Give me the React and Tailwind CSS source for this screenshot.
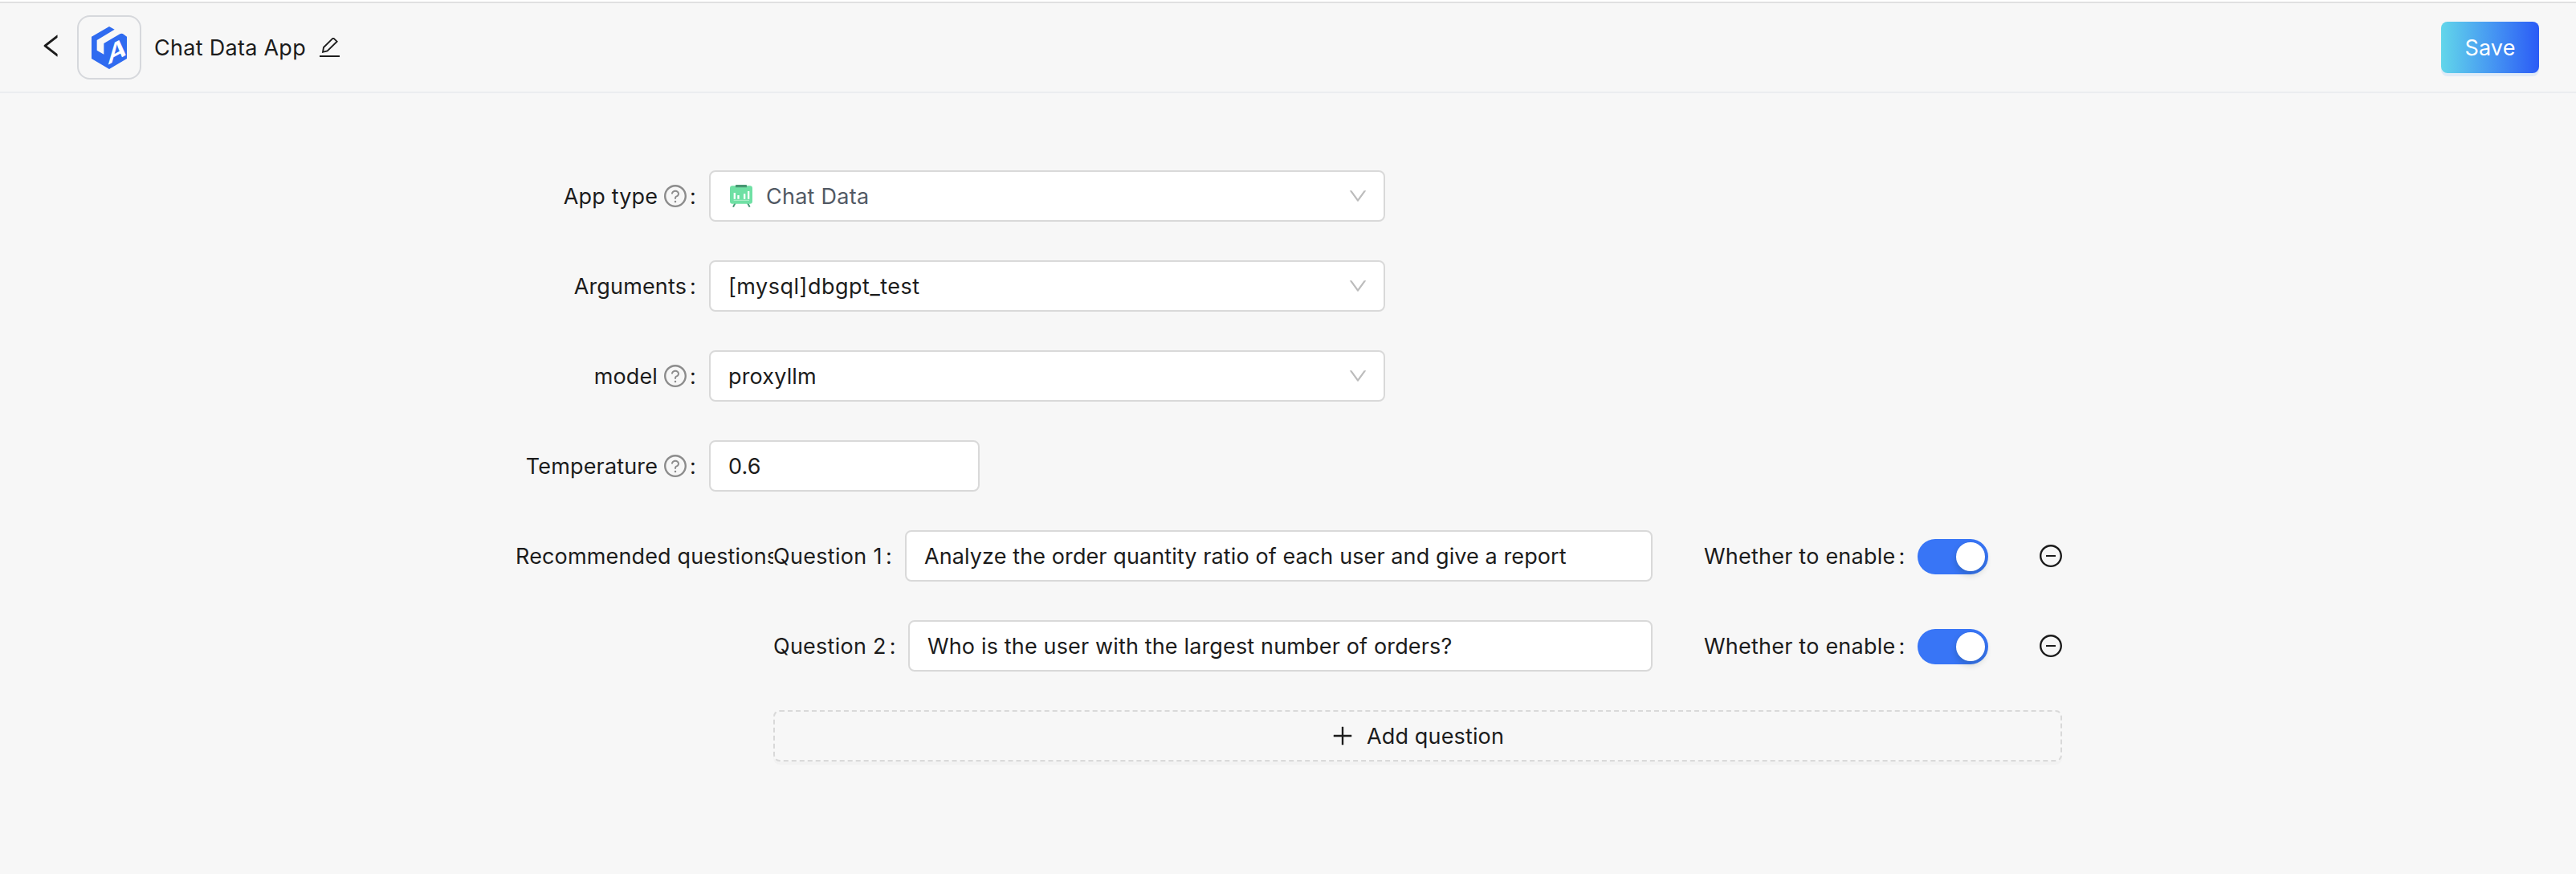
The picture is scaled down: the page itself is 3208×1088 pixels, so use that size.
import React from 'react';
import {
  AiOutlineLeft,
  AiOutlineQuestionCircle,
  AiOutlineDown,
  AiOutlineMinusCircle,
  AiOutlinePlus,
} from 'react-icons/ai';

const ICON_BOX = '64 64 896 896';

function Logo() {
  return (
    <svg className="h-[53px] w-[44px]" viewBox="342 97 132 159">
      <path
        fill="#2f6bf0"
        d="M408 97 428 108.500 362 148V186L388 201V160L448 125Q455 121 462 126L474 135V217L408 256 342 217V135Z"
      />
      <text
        transform="matrix(1 -0.55 0 1 402 241)"
        fill="#fff"
        fontFamily="Inter, sans-serif"
        fontWeight="600"
        fontSize="96"
      >
        A
      </text>
    </svg>
  );
}

function PencilIcon() {
  return (
    <svg className="size-7 shrink-0" viewBox="0 0 84 84" fill="none" stroke="currentColor">
      <path d="M18 42 52 8.500 56 8.500 68 20 32 55 15 59.500Z" strokeWidth="5.500" />
      <path d="M3 75H78" strokeWidth="6" />
    </svg>
  );
}

function BoardIcon() {
  return (
    <svg className="size-7 shrink-0" viewBox="0 0 84 84">
      <path d="M20 68 12 83M66 68 74 83" stroke="#4a9a78" strokeWidth="6" />
      <rect x="0" y="4" width="84" height="67" rx="9" fill="#6fe0a4" />
      <rect x="21" y="0" width="42" height="10" rx="2" fill="#479672" />
      <path d="M17.500 30V53M31.500 39V53M54.500 34V53M69.500 24V53" stroke="#fff" strokeWidth="7" />
      <path d="M14 58H72" stroke="#d4f7e3" strokeWidth="2" />
    </svg>
  );
}

function Colon() {
  return <span className="ml-1 mr-4">:</span>;
}

function Label({ text, help }) {
  return (
    <div className="flex w-[241px] shrink-0 items-center justify-end whitespace-nowrap">
      <span>{text}</span>
      {help && <AiOutlineQuestionCircle viewBox={ICON_BOX} className="ml-2 size-7 text-[#8c8c8c]" />}
      <Colon />
    </div>
  );
}

function Select({ children }) {
  return (
    <div className="flex h-16 w-[842px] items-center justify-between rounded-lg border-2 border-[#d9d9d9] bg-white pl-[22px] pr-5">
      <div className="flex items-center gap-4">{children}</div>
      <AiOutlineDown viewBox={ICON_BOX} className="size-6 text-[#bcbcbc]" />
    </div>
  );
}

function QuestionRow({ label, children }) {
  return (
    <div className="flex h-16 items-center whitespace-nowrap">
      {label}
      <div className="flex h-16 min-w-0 flex-1 items-center rounded-lg border-2 border-[#d9d9d9] bg-white pl-[22px]">
        {children}
      </div>
      <div className="ml-16 flex w-[266px] shrink-0 items-center justify-between">
        <span className="tracking-[0.22px]">Whether to enable</span>
        <Colon />
      </div>
      <div className="mt-[2px] flex h-11 w-[88px] shrink-0 items-center justify-end rounded-full bg-[#3875f6] px-1">
        <span className="size-9 rounded-full bg-white shadow-[0_4px_8px_rgba(0,35,11,0.2)]" />
      </div>
      <AiOutlineMinusCircle viewBox={ICON_BOX} className="ml-16 size-7 shrink-0" />
    </div>
  );
}

export default function App() {
  return (
    <div className="h-[1088px] w-[3208px] overflow-hidden bg-[#f7f7f7] font-['Inter',sans-serif] text-[27px] leading-[45px] tracking-[0.15px] text-[#1c1c1c]">
      <div className="h-1 border-b-2 border-[#e0e0e1] bg-white" />
      <header className="flex h-[112px] items-center justify-between border-b-2 border-[#ebedf0] pl-12 pr-[46px]">
        <div className="flex items-center gap-4">
          <AiOutlineLeft viewBox={ICON_BOX} className="size-8 -translate-y-[2px]" />
          <div className="flex size-20 items-center justify-center rounded-2xl border-2 border-[#d6d8dc]">
            <Logo />
          </div>
          <span className="tracking-[0.28px]">Chat Data App</span>
          <PencilIcon />
        </div>
        <button className="h-16 w-[122px] rounded-lg bg-linear-to-r/srgb from-[#62d6ea] via-[#4799f2] to-[#2b5bf6] pt-px text-white shadow-[0_4px_0_rgba(5,125,255,0.09)]">
          Save
        </button>
      </header>

      <main className="ml-[642px] mt-24 flex w-[1926px] flex-col gap-12">
        <div className="flex h-16 items-center">
          <Label text="App type" help />
          <Select>
            <div className="flex items-center gap-[17px] pl-[2px]">
              <BoardIcon />
              <span className="tracking-[0.25px] text-[#525964]">Chat Data</span>
            </div>
          </Select>
        </div>
        <div className="flex h-16 items-center">
          <Label text="Arguments" />
          <Select>
            <span className="tracking-[0.5px]">[mysql]dbgpt_test</span>
          </Select>
        </div>
        <div className="flex h-16 items-center">
          <Label text="model" help />
          <Select>
            <span>proxyllm</span>
          </Select>
        </div>
        <div className="flex h-16 items-center">
          <Label text="Temperature" help />
          <div className="flex h-16 w-[337px] items-center rounded-lg border-2 border-[#d9d9d9] bg-white pl-[22px]">
            0.6
          </div>
        </div>
        <div className="flex">
          <div className="flex h-16 w-[321px] shrink-0 items-center overflow-hidden whitespace-nowrap">
            <span>Recommended questions</span>
          </div>
          <div className="flex flex-1 flex-col gap-12">
            <QuestionRow
              label={
                <div className="flex w-[164px] shrink-0 items-center justify-between">
                  <span className="tracking-[0.3px]">Question 1</span>
                  <Colon />
                </div>
              }
            >
              <span className="tracking-[0.1px]">Analyze the order quantity ratio of each user and give a report</span>
            </QuestionRow>
            <QuestionRow
              label={
                <div className="flex w-[168px] shrink-0 items-center justify-between">
                  <span className="tracking-[0.25px]">Question 2</span>
                  <Colon />
                </div>
              }
            >
              Who is the user with the largest number of orders?
            </QuestionRow>
            <button className="flex h-16 items-center justify-center gap-4 rounded-lg border-2 border-dashed border-[#d9d9d9] shadow-[0_4px_0_rgba(0,0,0,0.02)]">
              <AiOutlinePlus viewBox={ICON_BOX} className="size-7" />
              <span>Add question</span>
            </button>
          </div>
        </div>
      </main>
    </div>
  );
}
